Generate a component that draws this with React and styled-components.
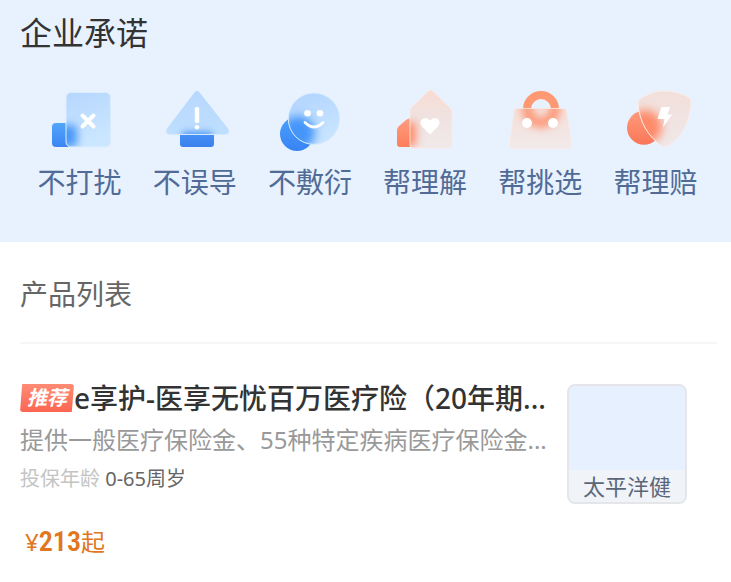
import React from "react";
import styled, { createGlobalStyle } from "styled-components";

//Icons
const NoDisturbIcon = () => (
  <Icon viewBox="0 0 72 64" aria-hidden="true">
    <defs>
      <linearGradient id="disturbBack" x1="0" y1="0" x2="0" y2="1">
        <stop offset="0" stopColor="#52a5fb" />
        <stop offset="1" stopColor="#3b85f2" />
      </linearGradient>
      <linearGradient id="disturbGlass" x1="0" y1="0" x2="0.3" y2="1">
        <stop offset="0" stopColor="#b5d6fe" />
        <stop offset="1" stopColor="#cbe7ff" />
      </linearGradient>
      <clipPath id="disturbClip">
        <rect x="22" y="4.5" width="44.5" height="54.5" rx="5" />
      </clipPath>
      <filter id="disturbBlur" x="-50%" y="-50%" width="200%" height="200%">
        <feGaussianBlur stdDeviation="4.5" />
      </filter>
    </defs>
    <rect x="8" y="35" width="26" height="24" rx="4" fill="url(#disturbBack)" />
    <rect x="22" y="4.5" width="44.5" height="54.5" rx="5" fill="url(#disturbGlass)" />
    <g clipPath="url(#disturbClip)">
      <rect x="8" y="37" width="25" height="22" rx="4" fill="#4a98f8" filter="url(#disturbBlur)" />
    </g>
    <rect x="22" y="4.5" width="44.5" height="54.5" rx="5" fill="none" stroke="#dcedff" />
    <path d="M38.5 27.5l11 11M49.5 27.5l-11 11" stroke="#fff" strokeWidth="4" strokeLinecap="round" />
  </Icon>
);

const NoMisleadIcon = () => (
  <Icon viewBox="0 0 72 64" aria-hidden="true">
    <defs>
      <linearGradient id="misleadBack" x1="0" y1="0" x2="0" y2="1">
        <stop offset="0" stopColor="#4b9bfa" />
        <stop offset="1" stopColor="#3b80ee" />
      </linearGradient>
      <linearGradient id="misleadGlass" x1="0" y1="0" x2="0" y2="1">
        <stop offset="0" stopColor="#b7d7fe" />
        <stop offset="1" stopColor="#bfdfff" />
      </linearGradient>
      <clipPath id="misleadClip">
        <path d="M35 5Q38 1 41 5L69 40.5Q72 46 66.5 46.5H11Q5 46 8 40.5Z" />
      </clipPath>
      <filter id="misleadBlur" x="-50%" y="-80%" width="200%" height="260%">
        <feGaussianBlur stdDeviation="3.5" />
      </filter>
    </defs>
    <rect x="21" y="38" width="34" height="21" rx="3" fill="url(#misleadBack)" />
    <path d="M35 5Q38 1 41 5L69 40.5Q72 46 66.5 46.5H11Q5 46 8 40.5Z" fill="url(#misleadGlass)" />
    <g clipPath="url(#misleadClip)">
      <rect x="23" y="44" width="30" height="14" fill="#4792f6" filter="url(#misleadBlur)" />
    </g>
    <path d="M8 40.5Q5 46 11 46.5H66.5Q72 46 69 40.5" fill="none" stroke="#d6eaff" />
    <rect x="35.8" y="19" width="4.4" height="16" rx="1.5" fill="#fff" />
    <circle cx="38" cy="39.3" r="2.3" fill="#fff" />
  </Icon>
);

const NoPerfunctoryIcon = () => (
  <Icon viewBox="0 0 72 64" aria-hidden="true">
    <defs>
      <linearGradient id="smileBack" x1="0" y1="0" x2="0" y2="1">
        <stop offset="0" stopColor="#4ba0fb" />
        <stop offset="1" stopColor="#3784f5" />
      </linearGradient>
      <linearGradient id="smileGlass" x1="0" y1="0" x2="0.4" y2="1">
        <stop offset="0" stopColor="#b0d3fe" />
        <stop offset="1" stopColor="#c8e4ff" />
      </linearGradient>
      <clipPath id="smileClip">
        <circle cx="40" cy="30.7" r="25.7" />
      </clipPath>
      <filter id="smileBlur" x="-50%" y="-50%" width="200%" height="200%">
        <feGaussianBlur stdDeviation="5" />
      </filter>
    </defs>
    <circle cx="23" cy="46" r="17" fill="url(#smileBack)" />
    <circle cx="40" cy="30.7" r="25.7" fill="url(#smileGlass)" />
    <g clipPath="url(#smileClip)">
      <circle cx="24" cy="45" r="17" fill="#4595f9" filter="url(#smileBlur)" />
    </g>
    <circle cx="40" cy="30.7" r="25.7" fill="none" stroke="#d9ecff" />
    <circle cx="33.5" cy="25.3" r="3.3" fill="#fff" />
    <circle cx="46" cy="25.3" r="3.3" fill="#fff" />
    <path d="M31 34.5Q40 43.5 49 34.5" fill="none" stroke="#fff" strokeWidth="2.6" strokeLinecap="round" />
  </Icon>
);

const HelpUnderstandIcon = () => (
  <Icon viewBox="0 0 72 64" aria-hidden="true">
    <defs>
      <linearGradient id="houseBack" x1="0" y1="0" x2="0" y2="1">
        <stop offset="0" stopColor="#ff9d7f" />
        <stop offset="1" stopColor="#fd7f5b" />
      </linearGradient>
      <linearGradient id="houseGlass" x1="0" y1="0" x2="0" y2="1">
        <stop offset="0" stopColor="#f8dcd3" />
        <stop offset="0.5" stopColor="#efe3e2" />
        <stop offset="1" stopColor="#f1e9e9" />
      </linearGradient>
      <clipPath id="houseClip">
        <path d="M39.5 3Q41.7 1 44 3L61.5 20.5Q63 22 63 24V57Q63 60 60 60H24Q21 60 21 57V23Q21 21 22.5 19.5Z" />
      </clipPath>
      <filter id="houseBlur" x="-60%" y="-50%" width="220%" height="200%">
        <feGaussianBlur stdDeviation="4.5" />
      </filter>
    </defs>
    <path d="M8 42Q8 40 9.5 38.5L17 32Q20 29 24 32V59H11Q8 59 8 56Z" fill="url(#houseBack)" />
    <path d="M39.5 3Q41.7 1 44 3L61.5 20.5Q63 22 63 24V57Q63 60 60 60H24Q21 60 21 57V23Q21 21 22.5 19.5Z" fill="url(#houseGlass)" />
    <g clipPath="url(#houseClip)">
      <rect x="8" y="34" width="19" height="24" fill="#ff8d6c" filter="url(#houseBlur)" />
    </g>
    <path d="M39.5 3Q41.7 1 44 3L61.5 20.5Q63 22 63 24V57Q63 60 60 60H24Q21 60 21 57V23Q21 21 22.5 19.5Z" fill="none" stroke="#fbeae5" strokeWidth="0.8" />
    <path d="M41 46.5L33 38.5C28.5 33 35 27 41 32.5C47 27 53.5 33 49 38.5Z" fill="#fff" />
  </Icon>
);

const HelpChooseIcon = () => (
  <Icon viewBox="0 0 72 64" aria-hidden="true">
    <defs>
      <linearGradient id="bagGlass" x1="0" y1="0" x2="0" y2="1">
        <stop offset="0" stopColor="#f4dfd9" />
        <stop offset="1" stopColor="#f1eaea" />
      </linearGradient>
      <clipPath id="bagClip">
        <path d="M13 20.5H59.5Q62 20.5 62.7 23L67.5 57.5Q68 60.5 65 60.5H8Q5 60.5 5.5 57.5L10 23Q10.5 20.5 13 20.5Z" />
      </clipPath>
      <filter id="bagBlur" x="-50%" y="-50%" width="200%" height="200%">
        <feGaussianBlur stdDeviation="4" />
      </filter>
    </defs>
    <circle cx="37" cy="21" r="14" fill="none" stroke="#ff9974" strokeWidth="8" />
    <path d="M13 20.5H59.5Q62 20.5 62.7 23L67.5 57.5Q68 60.5 65 60.5H8Q5 60.5 5.5 57.5L10 23Q10.5 20.5 13 20.5Z" fill="url(#bagGlass)" />
    <g clipPath="url(#bagClip)">
      <circle cx="37" cy="21" r="14" fill="none" stroke="#ff8d69" strokeWidth="9" filter="url(#bagBlur)" />
    </g>
    <path d="M13 20.5H59.5Q62 20.5 62.7 23L67.5 57.5Q68 60.5 65 60.5H8Q5 60.5 5.5 57.5L10 23Q10.5 20.5 13 20.5Z" fill="none" stroke="#fae8e2" strokeWidth="0.8" />
    <circle cx="23" cy="35" r="5" fill="#fff" />
    <circle cx="49" cy="35" r="5" fill="#fff" />
  </Icon>
);

const HelpClaimIcon = () => (
  <Icon viewBox="0 0 72 64" aria-hidden="true">
    <defs>
      <linearGradient id="shieldBack" x1="0" y1="0" x2="0" y2="1">
        <stop offset="0" stopColor="#ff9c7c" />
        <stop offset="1" stopColor="#fa7659" />
      </linearGradient>
      <linearGradient id="shieldGlass" x1="0" y1="0" x2="0" y2="1">
        <stop offset="0" stopColor="#f2dfda" />
        <stop offset="1" stopColor="#efe8e9" />
      </linearGradient>
      <clipPath id="shieldClip">
        <path d="M21 11Q33 3 45 3Q58 3 70 9.5Q72 10.5 72 13C71 34 63 50 48 58Q45.5 59.5 43 58C29 49 20 33 19 15Q19 12.5 21 11Z" />
      </clipPath>
      <filter id="shieldBlur" x="-50%" y="-50%" width="200%" height="200%">
        <feGaussianBlur stdDeviation="5" />
      </filter>
    </defs>
    <circle cx="25" cy="39.7" r="17" fill="url(#shieldBack)" />
    <path d="M21 11Q33 3 45 3Q58 3 70 9.5Q72 10.5 72 13C71 34 63 50 48 58Q45.5 59.5 43 58C29 49 20 33 19 15Q19 12.5 21 11Z" fill="url(#shieldGlass)" />
    <g clipPath="url(#shieldClip)">
      <circle cx="26" cy="39" r="17" fill="#ff8a69" filter="url(#shieldBlur)" />
    </g>
    <path d="M21 11Q33 3 45 3Q58 3 70 9.5Q72 10.5 72 13C71 34 63 50 48 58Q45.5 59.5 43 58C29 49 20 33 19 15Q19 12.5 21 11Z" fill="none" stroke="#fdebe4" />
    <path d="M42.5 19H51L48.5 26.5H53L44 39.5L45.5 31H38.5Z" fill="#fff" />
  </Icon>
);

//Data
const promises = [
  { name: "不打扰", icon: NoDisturbIcon },
  { name: "不误导", icon: NoMisleadIcon },
  { name: "不敷衍", icon: NoPerfunctoryIcon },
  { name: "帮理解", icon: HelpUnderstandIcon },
  { name: "帮挑选", icon: HelpChooseIcon },
  { name: "帮理赔", icon: HelpClaimIcon },
];

const products = [
  {
    id: 1,
    tag: "推荐",
    name: "e享护-医享无忧百万医疗险（20年期...",
    summary: "提供一般医疗保险金、55种特定疾病医疗保险金...",
    age: "0-65周岁",
    price: 213,
    company: "太平洋健",
  },
];

const App = () => {
  return (
    <>
      <GlobalStyle />
      <PromiseSection>
        <PromiseTitle>企业承诺</PromiseTitle>
        <PromiseList>
          {promises.map(({ name, icon: PromiseIcon }) => (
            <PromiseItem key={name}>
              <PromiseIcon />
              <span>{name}</span>
            </PromiseItem>
          ))}
        </PromiseList>
      </PromiseSection>
      <ProductSection>
        <ProductTitle>产品列表</ProductTitle>
        {products.map((product) => (
          <Product key={product.id}>
            <Info>
              <NameRow>
                <Tag>{product.tag}</Tag>
                <Name>{product.name}</Name>
              </NameRow>
              <Summary>{product.summary}</Summary>
              <Age>
                投保年龄 <span>{product.age}</span>
              </Age>
              <Price>
                ¥<strong>{product.price}</strong>起
              </Price>
            </Info>
            <Cover>
              <figcaption>{product.company}</figcaption>
            </Cover>
          </Product>
        ))}
      </ProductSection>
    </>
  );
};

const GlobalStyle = createGlobalStyle`
  * {
    margin: 0;
    padding: 0;
    box-sizing: border-box;
  }
  body {
    background: #fff;
    color: #333;
    font-family: "Noto Sans", "Noto Sans CJK SC", sans-serif;
  }
`;
const PromiseSection = styled.section`
  padding: 10px 18px 40px 20px;
  background: #e8f2ff;
`;
const PromiseTitle = styled.h2`
  font-size: 32px;
  font-weight: 400;
  line-height: 46px;
`;
const PromiseList = styled.ul`
  display: grid;
  grid-template-columns: repeat(6, 1fr);
  padding-top: 32px;
  padding-left: 2px;
  list-style: none;
`;
const PromiseItem = styled.li`
  display: flex;
  flex-direction: column;
  align-items: center;
  gap: 10px;
  color: #516b97;
  font-size: 28px;
  line-height: 40px;
  white-space: nowrap;
`;
const Icon = styled.svg`
  width: 72px;
  height: 64px;
`;
const ProductSection = styled.section`
  padding: 32px 14px 20px 20px;
`;
const ProductTitle = styled.h2`
  padding-bottom: 28px;
  border-bottom: 2px solid #f6f6f6;
  color: #666;
  font-size: 28px;
  font-weight: 400;
  line-height: 40px;
`;
const Product = styled.article`
  display: flex;
  align-items: flex-start;
  gap: 20px;
  padding: 40px 30px 0 0;
`;
const Info = styled.div`
  flex: 1;
  min-width: 0;
  white-space: nowrap;
`;
const NameRow = styled.div`
  display: flex;
  align-items: center;
  height: 28px;
`;
const Tag = styled.span`
  flex: none;
  width: 54px;
  height: 28px;
  background: linear-gradient(#ff8b74, #fb6652);
  border-radius: 3px;
  clip-path: polygon(4% 0, 100% 0, 96% 100%, 0 100%);
  color: #fff;
  font-size: 20px;
  font-style: italic;
  font-weight: 600;
  line-height: 28px;
  text-align: center;
`;
const Name = styled.h3`
  font-size: 28px;
  font-weight: 500;
  line-height: 32px;
`;
const Summary = styled.p`
  padding-top: 10px;
  color: #999;
  font-size: 24px;
  line-height: 36px;
`;
const Age = styled.p`
  padding-top: 6px;
  color: #c4c4c4;
  font-size: 20px;
  line-height: 30px;
  span {
    color: #666;
  }
`;
const Price = styled.p`
  display: flex;
  align-items: baseline;
  padding: 28px 0 0 5px;
  color: #e07620;
  font-size: 24px;
  line-height: 40px;
  strong {
    font-family: "Noto Sans ExtraCondensed", "Noto Sans Condensed", "Roboto Condensed", sans-serif;
    font-size: 28px;
    font-weight: 600;
  }
`;
const Cover = styled.figure`
  display: flex;
  flex: none;
  align-items: flex-end;
  width: 120px;
  height: 120px;
  overflow: hidden;
  background: #e6f0ff;
  border: 2px solid #e4e6ea;
  border-radius: 8px;
  figcaption {
    flex: 1;
    background: #f0f4f9;
    color: #5c6678;
    font-size: 22px;
    line-height: 32px;
    text-align: center;
  }
`;

export default App;
